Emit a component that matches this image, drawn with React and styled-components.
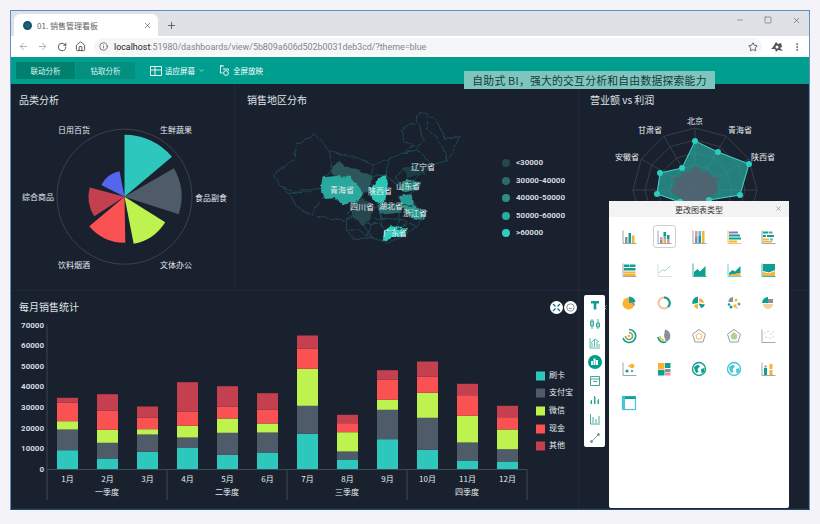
import React from 'react';
import styled, { createGlobalStyle } from 'styled-components';
import { ArrowLeft, ArrowRight, RotateCw, Home, Info, Star, MoreVertical, Plus, X, Minus, Square, ChevronDown } from 'lucide-react';

const CJK = '"Noto Sans CJK SC", "Noto Sans", sans-serif';
const TEAL = '#2ec7bd', SLATE = '#4f5b69', LIME = '#bdf24f', RED = '#fa5252', CRIMSON = '#c4404f', BLUE = '#5566ee';

const GlobalStyle = createGlobalStyle`
  html, body { margin: 0; padding: 0; background: #f4f3f7; }
  * { box-sizing: border-box; }
`;

const Page = styled.div`
  width: 820px;
  height: 524px;
  padding: 10px;
  background: #f4f3f7;
  font-family: ${CJK};
`;
const Shell = styled.div`
  position: relative;
  width: 800px;
  height: 500px;
  display: flex;
  flex-direction: column;
  border: 1px solid #5f8fc0;
  border-bottom-color: #1d4a70;
  overflow: hidden;
`;
const TabStrip = styled.div`
  height: 25px;
  display: flex;
  align-items: flex-end;
  padding-left: 3px;
  background: #dee1e6;
  color: #3c4043;
`;
const Tab = styled.div`
  width: 144px;
  height: 22px;
  display: flex;
  align-items: center;
  gap: 5px;
  padding: 0 6px 0 9px;
  background: #fff;
  border-radius: 6px 6px 0 0;
  font-size: 8px;
  color: #5f6368;
`;
const Favicon = styled.span`
  width: 9px;
  height: 9px;
  border-radius: 50%;
  background: #1a6478;
  border: 2px solid #17506a;
`;
const TabLabel = styled.span`
  flex: 1;
`;
const NewTab = styled.div`
  width: 27px;
  height: 22px;
  display: flex;
  align-items: center;
  justify-content: center;
`;
const WindowControls = styled.div`
  margin-left: auto;
  align-self: flex-start;
  display: flex;
  padding: 5px 8px 0 0;
  gap: 20px;
  color: #444;
`;
const AddressRow = styled.div`
  height: 21px;
  display: flex;
  align-items: center;
  padding: 0 3px;
  background: #fff;
  color: #5f6368;
`;
const NavButton = styled.span`
  width: 19px;
  display: flex;
  justify-content: center;
  color: ${(p) => (p.$muted ? '#a8acb0' : '#4a4d50')};
`;
const UrlPill = styled.div`
  flex: 1;
  height: 17px;
  margin: 0 8.5px 0 4px;
  display: flex;
  align-items: center;
  gap: 6px;
  padding: 0 4px 0 5px;
  background: #f5f6f7;
  border-radius: 9px;
  font-family: Roboto, sans-serif;
  font-size: 8.9px;
  color: #80868b;
`;
const Host = styled.span`
  color: #222;
`;
const StarSlot = styled.span`
  margin-left: auto;
  display: flex;
  color: #444;
`;
const PuzzleMark = styled.svg`
  margin-right: 3px;
`;
const ActionBar = styled.div`
  height: 27px;
  display: flex;
  align-items: center;
  padding-left: 5px;
  background: #009e8e;
  color: #dff5f1;
  font-size: 7.5px;
`;
const ModeButton = styled.div`
  width: 59px;
  height: 17px;
  margin-right: 1px;
  display: flex;
  align-items: center;
  justify-content: center;
  background: ${(p) => (p.$active ? '#00816f' : '#03907f')};
`;
const ActionItem = styled.div`
  display: flex;
  align-items: center;
  gap: 3px;
  margin-left: ${(p) => p.$gap}px;
  color: #fff;
`;
const Banner = styled.div`
  position: absolute;
  z-index: 3;
  left: 453px;
  top: 60px;
  width: 251px;
  height: 18px;
  display: flex;
  align-items: center;
  justify-content: center;
  background: #7ec6bd;
  color: #183a3c;
  font-size: 10.8px;
  letter-spacing: 0.25px;
  white-space: nowrap;
`;
const Dash = styled.div`
  position: relative;
  flex: 1;
  display: grid;
  grid-template-columns: 224px 344px 230px;
  grid-template-rows: 207px 218px;
  background: #19212e;
`;
const Panel = styled.section`
  min-width: 0;
  grid-column: ${(p) => p.$span || 'auto'};
  border-right: 1px solid #1f2a39;
  border-bottom: 1px solid #1f2a39;
  overflow: hidden;
`;
const Title = styled.div`
  height: 24px;
  display: flex;
  align-items: flex-start;
  justify-content: space-between;
  padding: 8px 1px 0 ${(p) => p.$inset || 8}px;
  color: #dfe4e8;
  font-size: 10px;
  line-height: 16px;
`;
const RoundTools = styled.div`
  display: flex;
  gap: 1px;
  margin-top: 2px;
`;
const RoundTool = styled.span`
  width: 13px;
  height: 13px;
  border-radius: 50%;
  background: #fff;
  display: flex;
  align-items: center;
  justify-content: center;
`;
const ChartSvg = styled.svg`
  display: block;
`;
const Label = styled.text`
  fill: ${(p) => p.$color || '#e6eaee'};
  font-family: ${(p) => (p.$num ? 'Roboto, sans-serif' : CJK)};
  font-weight: ${(p) => (p.$num ? 700 : 400)};
  font-size: ${(p) => p.$size || 8}px;
  text-anchor: ${(p) => p.$anchor || 'middle'};
  dominant-baseline: middle;
`;
const SideTools = styled.div`
  position: absolute;
  left: 573px;
  top: 211px;
  width: 21px;
  height: 152px;
  background: #fff;
  border-radius: 2px;
  display: flex;
  flex-direction: column;
`;
const SideTool = styled.div`
  height: 19px;
  display: flex;
  align-items: center;
  justify-content: center;
`;
const SelectedTool = styled.span`
  width: 14px;
  height: 14px;
  border-radius: 50%;
  background: #009e8e;
  display: flex;
  align-items: center;
  justify-content: center;
`;
const StrayClose = styled.span`
  position: absolute;
  left: 590px;
  top: 220px;
  display: flex;
  color: #e8ecef;
`;
const Popup = styled.div`
  position: absolute;
  left: 598px;
  top: 117px;
  width: 180px;
  height: 307px;
  background: #fff;
  border-radius: 2px;
`;
const PopupHead = styled.div`
  height: 16px;
  display: flex;
  align-items: center;
  justify-content: center;
  position: relative;
  background: #f3f3f3;
  color: #333;
  font-size: 8px;
`;
const PopupClose = styled.span`
  position: absolute;
  right: 7px;
  top: 4px;
  display: flex;
  color: #777;
`;
const IconGrid = styled.div`
  display: grid;
  grid-template-columns: repeat(5, 34.75px);
  grid-auto-rows: 33.2px;
  padding: 3px 0 0 3px;
`;
const IconCell = styled.div`
  display: flex;
  align-items: center;
  justify-content: center;
`;
const IconFrame = styled.span`
  width: 23px;
  height: 23px;
  display: flex;
  align-items: center;
  justify-content: center;
  border: ${(p) => (p.$selected ? '1px solid #cfcfcf' : '1px solid transparent')};
  border-radius: 3px;
`;

// pie segments: start angle, end angle, radius, colour
const roseData = [
  [0, 50, 62, TEAL],
  [60, 108, 57, SLATE],
  [122, 169, 48, LIME],
  [179, 230, 46, RED],
  [237, 285, 36, CRIMSON],
  [297, 349, 26, BLUE],
];
const roseLabels = [
  ['生鲜蔬果', 176, 131], ['食品副食', 211, 199], ['文体办公', 176, 266],
  ['饮料烟酒', 74, 266], ['综合商品', 38, 198], ['日用百货', 74, 131],
];

const polar = (cx, cy, r, deg) => {
  const a = (deg * Math.PI) / 180;
  return [cx + r * Math.sin(a), cy - r * Math.cos(a)];
};
const wedge = (cx, cy, r, a0, a1) => {
  const [x0, y0] = polar(cx, cy, r, a0);
  const [x1, y1] = polar(cx, cy, r, a1);
  return `M${cx} ${cy}L${x0} ${y0}A${r} ${r} 0 0 1 ${x1} ${y1}Z`;
};

const RoseChart = () => (
  <ChartSvg width="223" height="182" viewBox="11 108 223 182">
    <circle cx="124.5" cy="196.7" r="67.5" fill="none" stroke="#39424f" />
    {roseData.map(([a0, a1, r, c]) => (
      <path key={a0} d={wedge(124.5, 196.7, r, a0, a1)} fill={c} />
    ))}
    {roseLabels.map(([t, x, y]) => <Label key={t} x={x} y={y}>{t}</Label>)}
  </ChartSvg>
);

const chinaOutline = 'M100 255L125 235L165 205L170 165L205 145L225 130L255 165L265 185L310 195L355 205L400 225L450 205L490 190L525 165L490 155L485 120L530 95L535 68L565 70L590 95L615 145L660 140L640 180L625 210L580 225L540 255L520 275L500 280L540 285L510 310L530 350L550 375L530 410L490 440L440 460L400 445L340 445L320 420L320 390L260 385L215 375L170 350L145 310L120 290Z';
const provinceLines = [
  'M120 290L160 305L245 295', 'M145 310L215 305', 'M265 185L275 240L250 262',
  'M215 375L250 320', 'M320 390L340 375L365 400L400 445', 'M400 225L395 260L435 255L450 205',
  'M490 240L525 220L580 225', 'M490 190L530 180L580 225', 'M565 70L560 120L590 140L625 210',
  'M535 95L550 150L530 180', 'M480 290L455 270L435 255', 'M430 340L480 345L520 350',
  'M390 385L440 385L490 390L530 410', 'M365 400L420 400L440 425', 'M480 365L470 420L495 415',
  'M420 370L430 420', 'M320 420L360 420L400 445', 'M490 240L470 262L480 290', 'M555 255L530 235',
  'M355 330L340 345L320 390', 'M400 350L415 345', 'M460 425L500 400', 'M380 440L400 400',
];
const provinceFills = [
  ['M272 242L298 212L322 232L352 238L398 258L392 302L365 310L330 265L290 262Z', '#29565c'],
  ['M335 345L365 326L402 348L394 388L365 404L336 378Z', '#26474f'],
  ['M490 240L525 222L560 235L535 255L500 262Z', '#1f3c45'],
  ['M248 262L290 258L332 260L368 305L358 334L310 344L285 322L250 324L242 295Z', '#2aa89e'],
  ['M437 252L444 280L434 344L398 332L392 300L413 268Z', '#2cc5b5'],
  ['M476 292L498 266L544 278L534 298L488 308Z', '#2a8f88'],
  ['M478 318L512 312L524 348L560 364L548 390L514 384L486 352Z', '#2c9a90'],
  ['M412 342L482 342L484 368L418 374Z', '#2a6a6c'],
  ['M428 458L432 424L455 406L500 413L498 438L452 444Z', '#2fd0bf'],
];
const mapLabels = [
  ['辽宁省', 423, 168], ['青海省', 342, 191], ['陕西省', 380, 192], ['山东省', 408, 187],
  ['四川省', 362, 208], ['湖北省', 391, 207], ['浙江省', 415, 214], ['广东省', 395, 234],
];
const mapLegend = [
  ['<30000', 163, '#27474f'], ['30000-40000', 181, '#2a6a6c'], ['40000-50000', 198, '#2a8f88'],
  ['50000-60000', 216, '#2bab9f'], ['>60000', 233, '#2ecdbd'],
];

const MapChart = () => (
  <ChartSvg width="343" height="182" viewBox="235 108 343 182">
    <defs>
      <filter id="coastline" x="-5%" y="-5%" width="110%" height="110%">
        <feTurbulence type="fractalNoise" baseFrequency="0.05" numOctaves="2" seed="4" />
        <feDisplacementMap in="SourceGraphic" scale="14" xChannelSelector="R" yChannelSelector="G" />
      </filter>
    </defs>
    <g transform="translate(240 90) scale(0.3333)" filter="url(#coastline)">
      {provinceFills.map(([d, c]) => <path key={d} d={d} fill={c} />)}
      <path d={chinaOutline} fill="none" stroke="#1e4650" strokeWidth="3" />
      {provinceLines.map((d) => <path key={d} d={d} fill="none" stroke="#1d4a50" strokeWidth="3" />)}
    </g>
    {mapLabels.map(([t, x, y]) => <Label key={t} x={x} y={y}>{t}</Label>)}
    {mapLegend.map(([t, y, c]) => (
      <g key={t}>
        <circle cx="506" cy={y} r="4" fill={c} />
        <Label x="516" y={y} $anchor="start" $num $color="#d5dbe0">{t}</Label>
      </g>
    ))}
  </ChartSvg>
);

const radarNames = [['北京', 695, 122], ['青海省', 740, 131], ['陕西省', 763, 158], ['安徽省', 627, 158], ['甘肃省', 650, 131]];
const ring = (r) => Array.from({ length: 12 }, (_, i) => polar(695, 190, r, i * 30).join(',')).join(' ');
const radarOuter = [[695, 141], [718, 152], [749, 164], [740, 195], [709, 200], [680, 202], [657, 194], [660, 173], [682, 168]];
const radarInner = '695,165 701,172 708,171 712,178 720,177 716,184 718,190 708,200 695,205 680,198 670,190 676,184 672,178 681,177 683,172 690,172';

const RadarChart = () => (
  <ChartSvg width="230" height="182" viewBox="579 108 230 182">
    {[62, 50, 37, 25, 12].map((r) => <polygon key={r} points={ring(r)} fill="none" stroke="#363e4a" />)}
    {Array.from({ length: 12 }, (_, i) => {
      const [x, y] = polar(695, 190, 62, i * 30);
      return <line key={i} x1="695" y1="190" x2={x} y2={y} stroke="#363e4a" />;
    })}
    <polygon points={radarOuter.map((p) => p.join(',')).join(' ')} fill="#2aa59d" fillOpacity="0.72" stroke="#41d8c8" />
    <polygon points={radarInner} fill="#56606f" fillOpacity="0.85" />
    {radarOuter.map(([x, y]) => <circle key={x} cx={x} cy={y} r="3" fill="#2ecdbd" />)}
    {radarNames.map(([t, x, y]) => <Label key={t} x={x} y={y}>{t}</Label>)}
  </ChartSvg>
);

// cumulative bar tops measured up from the axis, in px
const months = [
  ['1月', [19.3, 40, 48.3, 66.7, 71.7]], ['2月', [11, 26.7, 39.7, 58.7, 75.3]], ['3月', [17.7, 35, 40.3, 51.7, 63]],
  ['4月', [22, 32, 43.7, 57.7, 87.3]], ['5月', [14.7, 36.7, 51, 63, 83.3]], ['6月', [17, 37, 46, 60, 76.3]],
  ['7月', [35.7, 63.7, 100.7, 120.7, 134]], ['8月', [10, 18, 37.3, 46.3, 54.7]], ['9月', [30.3, 59.7, 69.7, 89.7, 99.3]],
  ['10月', [19.7, 51.7, 76.7, 92.7, 108]], ['11月', [9, 27, 53.7, 74.3, 85.7]], ['12月', [8, 20.3, 40, 52.3, 63.7]],
];
const barColors = [TEAL, SLATE, LIME, RED, CRIMSON];
const quarters = [['一季度', 107], ['二季度', 227], ['三季度', 347], ['四季度', 467]];
const barLegend = [['刷卡', 376], ['支付宝', 393], ['微信', 411], ['现金', 429], ['其他', 446]];
const BASE = 469.5;

const BarChart = () => (
  <ChartSvg width="568" height="194" viewBox="11 315 568 194">
    {[0, 1, 2, 3, 4, 5, 6, 7].map((i) => (
      <Label key={i} x="44" y={BASE - i * 20.55} $anchor="end" $num $color="#d5dbe0">{i ? i * 10000 : 0}</Label>
    ))}
    <line x1="47" y1="324" x2="47" y2={BASE} stroke="#3a4552" />
    {months.map(([name, tops], i) => {
      const x = 57 + i * 40;
      return (
        <g key={name}>
          {tops.map((top, j) => {
            const prev = j ? tops[j - 1] : 0;
            return <rect key={j} x={x} y={BASE - top} width="21" height={top - prev} fill={barColors[j]} />;
          })}
          <Label x={x + 10.5} y="480">{name}</Label>
        </g>
      );
    })}
    <line x1="47" y1={BASE} x2="527" y2={BASE} stroke="#3f4a57" />
    {[47, 167, 287, 407, 527].map((x) => <line key={x} x1={x} y1={BASE} x2={x} y2="500" stroke="#3f4a57" />)}
    {quarters.map(([t, x]) => <Label key={t} x={x} y="493">{t}</Label>)}
    {barLegend.map(([t, y], i) => (
      <g key={t}>
        <rect x="536" y={y - 4.5} width="9" height="9" fill={barColors[i]} />
        <Label x="549" y={y} $anchor="start">{t}</Label>
      </g>
    ))}
  </ChartSvg>
);

const OR = '#f9b233', TL = '#0f9f92', GR = '#87919b', PK = '#e88fa3', PU = '#a06cc4', SK = '#48c5d6', LG = '#cfd5d8';
const rects = (list) => list.map(([x, y, w, h, c], i) => <rect key={i} x={x} y={y} width={w} height={h} fill={c} />);
const axis = (c = GR) => <path d="M2 1.5V14.5H15.5" fill="none" stroke={c} strokeWidth="0.8" />;
const dots = (list) => list.map(([x, y, r, c], i) => <circle key={i} cx={x} cy={y} r={r} fill={c} />);
const globe = (c) => (
  <>
    <circle cx="8" cy="8" r="6.5" fill="#fff" stroke={c} strokeWidth="1.4" />
    <path d="M3 6L7 3.5L9 5.5L6.5 8L7.5 11L5 12L3.5 8.5ZM10 8L13.5 7L13 11L10.5 12.5Z" fill={c} />
  </>
);
const pentagon = (inner) => (
  <>
    <path d="M8 1.5L14.5 6.2L12 14H4L1.5 6.2Z" fill="#fff" stroke={GR} strokeWidth="0.9" />
    {inner}
  </>
);

const chartGlyphs = [
  <>{axis()}{rects([[4, 8, 2.5, 6, GR], [7.5, 4, 2.5, 10, TL], [11, 6.5, 2.5, 7.5, OR]])}</>,
  <>{axis()}{rects([[4, 8, 2.5, 3, PK], [4, 11, 2.5, 3, GR], [7.5, 3, 2.5, 4, TL], [7.5, 7, 2.5, 3, SK], [7.5, 10, 2.5, 4, OR], [11, 6, 2.5, 4, TL], [11, 10, 2.5, 4, PK]])}</>,
  <>{axis()}{rects([[4, 2, 2.5, 6, PK], [4, 8, 2.5, 6, GR], [7.5, 2, 2.5, 5, SK], [7.5, 7, 2.5, 7, TL], [11, 2, 2.5, 8, OR], [11, 10, 2.5, 4, OR]])}</>,
  <>{axis(OR)}{rects([[3, 2.5, 9, 2, PU], [3, 5.5, 11, 2, TL], [3, 8.5, 12, 2, TL], [3, 11.5, 8, 2, OR]])}</>,
  <>{axis()}{rects([[3, 2.5, 5, 2, TL], [8.5, 2.5, 4, 2, GR], [3, 6, 3, 2, TL], [7, 6, 7, 2, TL], [3, 9.5, 6, 2, OR], [10, 9.5, 3, 2, SK], [3, 12, 9, 1.5, OR]])}</>,
  <>{axis()}{rects([[3, 2.5, 5, 2.5, TL], [8.5, 2.5, 6, 2.5, TL], [3, 6, 11.5, 2.5, TL], [3, 9.5, 11.5, 2, OR], [3, 12, 11.5, 2, OR]])}</>,
  <>{axis(LG)}<path d="M3 11L6.5 7.5L9 9L14 4" fill="none" stroke="#9cc7c6" strokeWidth="0.9" /></>,
  <>{axis(TL)}<path d="M3 14V10L6.5 7L9 9.5L14.5 4V14Z" fill={TL} /></>,
  <>{axis(SK)}<path d="M3 11L6.5 8L9 9.5L14.5 4V11L9 12L3 13Z" fill={TL} /><path d="M3 13L9 12L14.5 11V14H3Z" fill={OR} /></>,
  <>{axis(TL)}<path d="M3 2H15V8L9 10.5L3 9Z" fill={TL} /><path d="M3 10L9 11.5L15 9V14H3Z" fill={OR} /></>,
  <><circle cx="7.5" cy="8.5" r="6" fill={OR} /><path d="M8 8V1.5A6.5 6.5 0 0 1 14.5 7Z" fill={TL} /><path d="M9.5 6.5L14 9L13 11Z" fill={GR} /></>,
  <><circle cx="8" cy="8" r="5.5" fill="none" stroke="#eec29b" strokeWidth="2" /><path d="M8 2.5A5.5 5.5 0 0 1 12 12" fill="none" stroke={TL} strokeWidth="2" /></>,
  <><path d="M7 8L1.5 9A6 6 0 0 1 7 1.5Z" fill={TL} /><path d="M8 7V3.5A5 5 0 0 1 13 8Z" fill={OR} /><path d="M7.5 8.5L14 9.5A5 5 0 0 1 10 13Z" fill={TL} /><path d="M7 9V14A5 5 0 0 1 3 10Z" fill={OR} /></>,
  <><path d="M7 7L2.5 7A5 5 0 0 1 7 2Z" fill={GR} />{dots([[10, 5, 1.5, OR], [13, 9, 1.5, GR], [9, 11, 1.7, OR], [5, 12, 1.5, TL], [3, 9.5, 1.2, TL], [11, 13, 1, LG]])}</>,
  <><path d="M8 8H2A6 6 0 0 1 8 2Z" fill={TL} /><path d="M8 8V4H13V8Z" fill={GR} /><path d="M3 9H13A5 5 0 0 1 3 9Z" fill="#f7cfa0" /></>,
  <><path d="M8 1.5A6.5 6.5 0 1 1 2 10" fill="none" stroke={TL} strokeWidth="1.6" /><path d="M8 4.5A3.5 3.5 0 1 1 4.5 8" fill="none" stroke="#8d9a5e" strokeWidth="1.6" /><circle cx="8" cy="8" r="1.3" fill={OR} /></>,
  <><path d="M9 1.5A6.5 6.5 0 0 1 10 14L8 8Z" fill={GR} /><path d="M2 9A6 6 0 0 0 10 14" fill="none" stroke={TL} strokeWidth="1.8" /><path d="M4 8A4 4 0 0 0 8 12" fill="none" stroke={OR} strokeWidth="1.6" /></>,
  pentagon(<path d="M8 5L11 7.2L10 11H6L5 7.2Z" fill="#fff" stroke={OR} strokeWidth="0.9" />),
  pentagon(<path d="M8 4L11.5 7.2L10.3 11.5H5.7L4.5 7.2Z" fill="#b5cf92" />),
  <>{axis()}{dots([[5, 5, 0.5, GR], [8, 3.5, 0.5, GR], [11, 6, 0.5, GR], [6, 9, 0.5, GR], [10, 10, 0.5, GR], [13, 4, 0.5, GR], [13, 9, 0.5, GR]])}</>,
  <>{axis()}{dots([[11, 5, 2.3, OR], [6, 10, 1.6, TL], [11, 10, 1.2, GR], [8, 5, 0.9, OR]])}</>,
  <>{rects([[2, 2, 6.5, 6.5, OR], [9, 2, 5.5, 5, TL], [2, 9, 6.5, 5.5, TL], [9, 8, 5.5, 3, GR], [9, 11.5, 5.5, 3, PK]])}</>,
  globe(TL),
  globe(SK),
  <>{axis()}{rects([[4, 7, 3, 7, TL], [4.5, 4.5, 2, 2, GR], [9.5, 3, 3, 5, OR], [9.5, 9, 3, 5, OR]])}</>,
  <><rect x="1.5" y="1.5" width="13" height="13" fill="#fff" stroke={SK} strokeWidth="1.2" /><rect x="1.5" y="1.5" width="13" height="2.5" fill={TL} /><rect x="1.5" y="1.5" width="2.5" height="13" fill={SK} /></>,
];

const ChartGlyph = ({ children }) => <svg width="16" height="16" viewBox="0 0 16 16">{children}</svg>;

const sideGlyphs = [
  <path d="M3 3H11V5.5H8.3V11.5H5.7V5.5H3Z" fill="#0f9f92" />,
  <path d="M4 2V12M2.5 4H5.5V9H2.5ZM10 2V12M8.5 6H11.5V10H8.5Z" fill="none" stroke="#2aa598" strokeWidth="0.9" />,
  <path d="M2 2V12H12M4 11V7M6.5 11V4M9 11V6M11 11V8M3 7L7 3L11 6" fill="none" stroke="#35ab9f" strokeWidth="0.8" />,
  null,
  <path d="M2.5 2.5H11.5V11.5H2.5ZM2.5 5H11.5M5 7.5H9" fill="none" stroke="#2b9d90" strokeWidth="0.9" />,
  <path d="M3 11V8M3.5 11V7M6.5 11V3M7 11V4M10 11V7M10.5 11V6" fill="none" stroke="#2aa598" strokeWidth="1" />,
  <path d="M2.5 2V12H12M5 11V5M8 11V7M11 11V4" fill="none" stroke="#2aa598" strokeWidth="0.9" />,
  <path d="M3.5 10.5L10.5 3.5M2.5 10a1 1 0 1 0 2 1 1 1 0 1 0-2-1M9.5 3a1 1 0 1 0 2 1 1 1 0 1 0-2-1" fill="#6d9a94" stroke="#6d9a94" strokeWidth="0.9" />,
];

const App = () => (
  <>
    <GlobalStyle />
    <Page>
      <Shell>
        <TabStrip>
          <Tab>
            <Favicon />
            <TabLabel>01. 销售管理看板</TabLabel>
            <X size={9} strokeWidth={1.6} color="#444" />
          </Tab>
          <NewTab><Plus size={11} strokeWidth={1.6} /></NewTab>
          <WindowControls>
            <Minus size={8} strokeWidth={1.4} />
            <Square size={8} strokeWidth={1.4} />
            <X size={9} strokeWidth={1.4} />
          </WindowControls>
        </TabStrip>
        <AddressRow>
          <NavButton $muted><ArrowLeft size={11} /></NavButton>
          <NavButton $muted><ArrowRight size={11} /></NavButton>
          <NavButton><RotateCw size={10} strokeWidth={2.2} /></NavButton>
          <NavButton><Home size={11} /></NavButton>
          <UrlPill>
            <Info size={9} color="#555" />
            <span><Host>localhost</Host>:51980/dashboards/view/5b809a606d502b0031deb3cd/?theme=blue</span>
            <StarSlot><Star size={10} /></StarSlot>
          </UrlPill>
          <PuzzleMark width="14" height="12" viewBox="0 0 14 12">
            <path d="M3 6L6 1L8 3L11 2L12 6L10 7L13 10L8 9L6 11L5 8L1 8Z" fill="#555" />
            <circle cx="7" cy="6" r="1.5" fill="#fff" />
          </PuzzleMark>
          <NavButton><MoreVertical size={10} /></NavButton>
        </AddressRow>
        <ActionBar>
          <ModeButton $active>联动分析</ModeButton>
          <ModeButton>钻取分析</ModeButton>
          <ActionItem $gap={14}>
            <svg width="12" height="10" viewBox="0 0 12 10">
              <path d="M.5.5H11.5V9.5H.5ZM.5 4H11.5M5 .5V9.5" fill="none" stroke="#fff" strokeWidth="0.9" />
            </svg>
            适应屏幕
            <ChevronDown size={7} />
          </ActionItem>
          <ActionItem $gap={14}>
            <svg width="11" height="11" viewBox="0 0 11 11">
              <path d="M5 1H1.5V8H3.5M1 1L3 .5M4 4H9.5V5.5" fill="none" stroke="#fff" strokeWidth="0.9" />
              <circle cx="7" cy="8" r="2.4" fill="none" stroke="#fff" strokeWidth="0.9" />
            </svg>
            全屏放映
          </ActionItem>
        </ActionBar>
        <Banner>自助式 BI，强大的交互分析和自由数据探索能力</Banner>
        <Dash>
          <Panel>
            <Title>品类分析</Title>
            <RoseChart />
          </Panel>
          <Panel>
            <Title $inset={12}>销售地区分布</Title>
            <MapChart />
          </Panel>
          <Panel>
            <Title $inset={11}>营业额 vs 利润</Title>
            <RadarChart />
          </Panel>
          <Panel $span="1 / span 2">
            <Title>
              每月销售统计
              <RoundTools>
                <RoundTool>
                  <svg width="9" height="9" viewBox="0 0 9 9">
                    <path d="M1 1L3.5 3.5M8 1L5.5 3.5M1 8L3.5 5.5M8 8L5.5 5.5" stroke="#1a6478" strokeWidth="1.2" />
                  </svg>
                </RoundTool>
                <RoundTool>
                  <svg width="9" height="9" viewBox="0 0 9 9">
                    <circle cx="4.5" cy="4.5" r="3.7" fill="none" stroke="#6d7780" strokeWidth="0.8" />
                    <path d="M2.8 5.5H6.2" stroke="#6d7780" strokeWidth="0.8" />
                  </svg>
                </RoundTool>
              </RoundTools>
            </Title>
            <BarChart />
          </Panel>
          <Panel />
          <SideTools>
            {sideGlyphs.map((g, i) => (
              <SideTool key={i}>
                {g ? (
                  <svg width="14" height="14" viewBox="0 0 14 14">{g}</svg>
                ) : (
                  <SelectedTool>
                    <svg width="9" height="9" viewBox="0 0 9 9">
                      <path d="M1 4H3V8H1ZM3.5 1.5H5.5V8H3.5ZM6 3H8V8H6Z" fill="#fff" />
                    </svg>
                  </SelectedTool>
                )}
              </SideTool>
            ))}
          </SideTools>
          <StrayClose><X size={7} /></StrayClose>
          <Popup>
            <PopupHead>
              更改图表类型
              <PopupClose><X size={7} strokeWidth={2} /></PopupClose>
            </PopupHead>
            <IconGrid>
              {chartGlyphs.map((g, i) => (
                <IconCell key={i}>
                  <IconFrame $selected={i === 1}>
                    <ChartGlyph>{g}</ChartGlyph>
                  </IconFrame>
                </IconCell>
              ))}
            </IconGrid>
          </Popup>
        </Dash>
      </Shell>
    </Page>
  </>
);

export default App;
